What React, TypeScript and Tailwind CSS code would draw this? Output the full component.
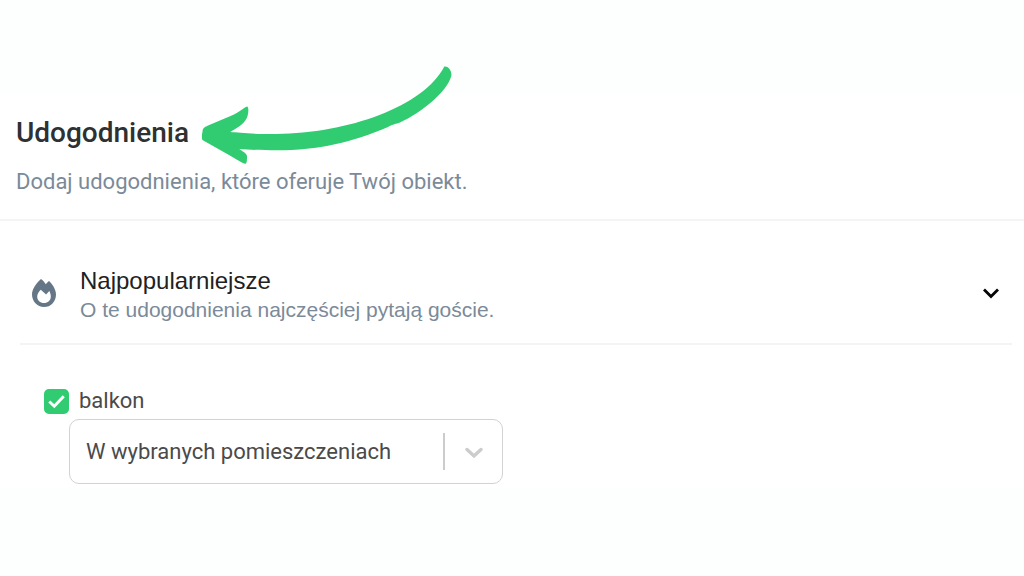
import { useState } from "react";

function Arrow() {
  return (
    <svg
      aria-hidden="true"
      viewBox="0 0 252 100"
      className="pointer-events-none absolute top-1/2 left-full ml-[11px] h-[100px] w-[252px] -translate-y-[68px]"
      fill="#31cc71"
    >
      <path d="M244.3 1.6 C247 .5 252.3 5 251.3 11 C247 27 221 48 200 57.5 C196 59 193 59.2 188 62 C153 77 119 85.3 76 85.3 C66 85.3 51 85 39.3 84 C43 87 48 88.5 47 93 C47 96 46.5 98.5 45.5 98.8 C44 99.3 36 94 29 90 L2.4 75 C1.5 73 2 69 2.5 66.5 C3 63 4 62.5 8 60.5 L30 51.3 C42 45.5 42.5 43.5 47 41.4 C49 41.5 48.7 49 46.8 53 C43.5 60.5 35 63.5 30.3 67 C39 67.5 51 69.2 76 69 C148 68.5 224 41.5 244.3 1.6 Z" />
    </svg>
  );
}

function Flame() {
  return (
    <svg aria-hidden="true" viewBox="0 0 24 28" className="mb-1 h-7 w-6 shrink-0" fill="#657786">
      <path
        fillRule="evenodd"
        d="M9 0 C10.8 1.4 12.5 3.2 13.8 5.2 C14.8 4 15.7 3 17 2 C20.4 5 24 10.7 24 15.4 C24 22.5 18.8 28 12 28 C5.2 28 0 22.5 0 15.6 C0 10.4 4 4.3 9 0 Z M8.8 10.7 C6.7 12.7 5.2 15.2 5.2 17.4 C5.2 21.3 8.2 24 12 24 C15.8 24 18.8 21.3 18.8 17.4 C18.8 15.5 18.2 13.8 17.3 12 L14.1 15.6 Z"
      />
    </svg>
  );
}

export default function App() {
  const [open, setOpen] = useState(true);
  const [balcony, setBalcony] = useState(true);

  return (
    <div className="min-h-screen bg-[#fdfffe] py-[93px] font-[Roboto,sans-serif]">
      <main className="bg-white pb-1">
        <header className="border-b-2 border-[#f3f4f4] px-4 pt-[22px] pb-[23px]">
          <h1 className="relative inline-block text-[28px] leading-9 font-medium text-[#2f3031]">
            Udogodnienia
            <Arrow />
          </h1>
          <p className="mt-[17px] text-[22px] leading-7 text-[#7b8a99]">
            Dodaj udogodnienia, które oferuje Twój obiekt.
          </p>
        </header>

        <section className="ml-5 mr-3">
          <h2 className="border-b-2 border-[#f3f4f4]">
            <button
              type="button"
              aria-expanded={open}
              aria-controls="popular"
              onClick={() => setOpen(!open)}
              className="flex w-full items-center gap-6 px-3 pt-[45px] pb-[19px] text-left font-['Liberation_Sans',sans-serif]"
            >
              <Flame />
              <span className="flex flex-1 flex-col">
                <span className="text-2xl leading-[30px] text-[#1f2122]">Najpopularniejsze</span>
                <span className="text-[21px] leading-7 text-[#7b8a99]">
                  O te udogodnienia najczęściej pytają goście.
                </span>
              </span>
              <svg
                aria-hidden="true"
                viewBox="0 0 18 12"
                className="mb-1 h-3 w-[18px]"
                fill="none"
                stroke="#050505"
                strokeWidth="2.8"
              >
                <path d="M2 2.5 L9 9.5 L16 2.5" />
              </svg>
            </button>
          </h2>

          {open && (
            <div id="popular" className="pt-[42px] pl-6">
              <label className="flex w-fit items-center gap-2.5 text-[22px] leading-7 text-[#4a4a4a]">
                <span className="relative block size-[25px]">
                  <input
                    type="checkbox"
                    checked={balcony}
                    onChange={() => setBalcony(!balcony)}
                    className="peer block size-full appearance-none rounded-[5px] border-2 border-[#d0d2d3] bg-white checked:border-[#31cc71] checked:bg-[#31cc71]"
                  />
                  <svg
                    aria-hidden="true"
                    viewBox="0 0 26 26"
                    className="pointer-events-none absolute inset-0 hidden peer-checked:block"
                    fill="none"
                    stroke="#fff"
                    strokeWidth="3"
                  >
                    <path d="M5.5 13 L10.7 18 L20.5 7.5" />
                  </svg>
                </span>
                balkon
              </label>
              <div className="relative mt-1 ml-[25px] max-w-[434px]">
                <select
                  aria-label="Dostępność: balkon"
                  className="h-[65px] w-full appearance-none rounded-[10px] border border-[#d2d2d2] bg-white pr-[76px] pl-4 text-[22px] text-[#4a4a4a]"
                >
                  <option>W wybranych pomieszczeniach</option>
                </select>
                <span className="pointer-events-none absolute inset-y-0 right-5 flex items-center gap-5">
                  <span className="h-[37px] w-0.5 bg-[#cccccc]" />
                  <svg
                    aria-hidden="true"
                    viewBox="0 0 18 12"
                    className="mt-0.5 h-3 w-[18px]"
                    fill="none"
                    stroke="#cccccc"
                    strokeWidth="3.4"
                    strokeLinecap="round"
                  >
                    <path d="M2 2.5 L9 9 L16 2.5" />
                  </svg>
                </span>
              </div>
            </div>
          )}
        </section>
      </main>
    </div>
  );
}
